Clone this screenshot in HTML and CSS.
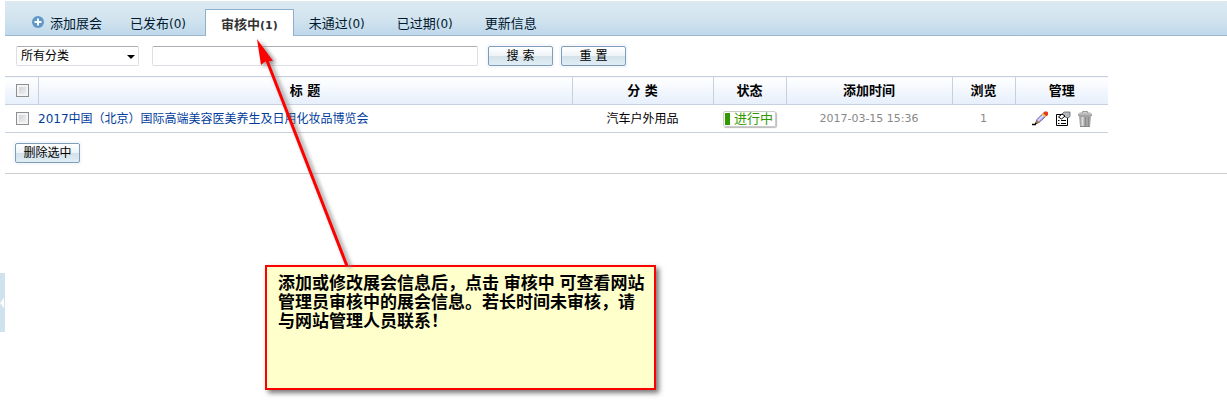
FILE: index.html
```html
<!DOCTYPE html>
<html lang="zh-CN">
<head>
  <meta charset="UTF-8">
  <meta name="viewport" content="width=device-width, initial-scale=1.0">
  <title>展会管理</title>
  <link rel="stylesheet" href="styles.css">
</head>
<body>
  <div class="page">
    <div class="side">
      <button class="side-toggle" type="button" aria-label="收起菜单"></button>
    </div>

    <div class="main">
      <nav class="tabs">
        <a class="tab tab-add" href="#">
          <svg class="icon-add" viewBox="0 0 12 12" width="12" height="12">
            <circle cx="6" cy="6" r="6" fill="#5f97c6"/>
            <path d="M6 2.500v7M2.500 6h7" stroke="#fff" stroke-width="2"/>
          </svg>添加展会</a>
        <a class="tab" href="#">已发布<span class="count">(0)</span></a>
        <a class="tab tab-on" href="#">审核中<span class="count">(1)</span></a>
        <a class="tab" href="#">未通过<span class="count">(0)</span></a>
        <a class="tab" href="#">已过期<span class="count">(0)</span></a>
        <a class="tab" href="#">更新信息</a>
      </nav>

      <form class="search">
        <span class="select-box">
          <select class="category" aria-label="分类">
            <option>所有分类</option>
          </select>
        </span>
        <input class="keyword" type="text" aria-label="关键词">
        <button class="btn" type="button">搜 索</button>
        <button class="btn" type="reset">重 置</button>
      </form>

      <table class="list">
        <colgroup>
          <col class="col-check">
          <col>
          <col class="col-category">
          <col class="col-status">
          <col class="col-time">
          <col class="col-views">
          <col class="col-manage">
        </colgroup>
        <thead>
          <tr>
            <th><input class="check" type="checkbox" aria-label="全选"></th>
            <th>标 题</th>
            <th>分 类</th>
            <th>状态</th>
            <th>添加时间</th>
            <th>浏览</th>
            <th>管理</th>
          </tr>
        </thead>
        <tbody>
          <tr>
            <td><input class="check" type="checkbox" aria-label="选择"></td>
            <td class="title"><a href="#">2017中国（北京）国际高端美容医美养生及日用化妆品博览会</a></td>
            <td>汽车户外用品</td>
            <td><span class="status">进行中</span></td>
            <td class="num">2017-03-15 15:36</td>
            <td class="num">1</td>
            <td>
              <div class="actions">
                <a href="#" aria-label="修改">
                  <svg viewBox="0 0 16 16" width="16" height="16">
                    <path d="M0 13.500h4" stroke="#000" stroke-width="1.500"/>
                    <path d="M3.500 12.500L5 8.500l6-6L14 5l-7 6.500z" fill="#b5b4f5" stroke="#5a5a9a"/>
                    <path d="M6 9.500l6-6" stroke="#dcdcff" stroke-width="1.500"/>
                    <path d="M3 13.500l1.500-4.500 3 2.500z" fill="#a07030"/>
                    <path d="M2.500 13.500l1-2 1.500 1.500z" fill="#000"/>
                    <path d="M9.500 3.500L11 2l3.500 3L13 6.200z" fill="#f8bd45"/>
                    <path d="M11 2l1.500-1.500H15l1 1V4l-1.500 1.200z" fill="#e23a1c"/>
                  </svg>
                </a>
                <a href="#" aria-label="属性">
                  <svg viewBox="0 0 16 16" width="16" height="16">
                    <path d="M1.500 3.500h11v11h-11z" fill="#fff" stroke="#000"/>
                    <path d="M3 9.500h1.500M3 12.500h1.500M6 9.500h5M6 12.500h5" stroke="#000"/>
                    <path d="M6 4l3-3h6v4.500l-2 1.500-3-1z" fill="#b4b8c2" stroke="#666" stroke-width=".8"/>
                    <path d="M3.500 6L7 3l3 2-3.500 3z" fill="#fff" stroke="#000"/>
                  </svg>
                </a>
                <a href="#" aria-label="删除">
                  <svg viewBox="0 0 14 16" width="14" height="16">
                    <path d="M4.500 2V.5h5V2" fill="none" stroke="#999"/>
                    <path d="M0 3l2-1.500h10L14 3v2H0z" fill="#a2a2a2"/>
                    <path d="M1 3h12" stroke="#d6d6d6"/>
                    <path d="M1 5h12l-1 10.500H2z" fill="#a5a5a5"/>
                    <path d="M4.500 6v9" stroke="#dedede" stroke-width="2"/>
                    <path d="M7.500 6v9M10.500 6v9" stroke="#8b8b8b"/>
                    <path d="M2 15.500h10" stroke="#888"/>
                  </svg>
                </a>
              </div>
            </td>
          </tr>
        </tbody>
      </table>

      <div class="foot">
        <button class="btn" type="button">删除选中</button>
      </div>
    </div>
  </div>

  <!-- help note and its arrow float over the list -->
  <div class="note">
    添加或修改展会信息后，点击 审核中 可查看网站管理员审核中的展会信息。若长时间未审核，请与网站管理人员联系！
  </div>
  <svg class="arrow" viewBox="0 0 110 231" width="110" height="231">
    <path d="M16 23L97 231" stroke="#f00" stroke-width="3"/>
    <path d="M7 4L11 30L16 26L23 26z" fill="#f00"/>
  </svg>
</body>
</html>
```

FILE: styles.css
```css
* {
  box-sizing: border-box;
}

body {
  margin: 0;
  background: #fff;
  color: #000;
  font-family: "DejaVu Sans", "Noto Sans CJK SC", sans-serif;
  font-size: 12px;
  line-height: 16px;
}

a {
  color: #003c9b;
  text-decoration: none;
}

button,
input,
select {
  margin: 0;
  font-family: inherit;
  font-size: 12px;
}

.page {
  display: flex;
}

/* left strip that folds the menu */
.side {
  flex: 0 0 5px;
  padding-top: 273px;
}

.side-toggle {
  display: flex;
  align-items: center;
  width: 100%;
  height: 59px;
  padding: 0;
  border: 0;
  background: #cfe2ee;
}

.side-toggle::before {
  content: "";
  border: 5px solid transparent;
  border-left: 0;
  border-right: 4px solid #fff;
}

.main {
  flex: 1;
  min-width: 0;
  padding-top: 1px;
}

/* tabs */
.tabs {
  display: flex;
  align-items: flex-end;
  height: 35px;
  padding-left: 12px;
  border-bottom: 1px solid #9db9d0;
  background: linear-gradient(#dce9f1, #d3e4ef 50%, #bfd8eb);
}

.tab {
  min-width: 88px;
  height: 26px;
  padding: 6px 15px 0;
  color: #00192e;
  font-size: 13px;
  line-height: 18px;
  white-space: nowrap;
}

.tab-add {
  display: flex;
  gap: 6px;
  width: 98px;
}

.icon-add {
  flex: none;
  margin-top: 1px;
}

.tab-on {
  height: 27px;
  margin: 0 0 -1px 2px;
  border: 1px solid #8fb0cc;
  border-bottom: 0;
  background: #fff;
  color: #333;
  font-weight: bold;
}

.count {
  font-size: 12px;
}

.tab-on .count {
  font-size: 11px;
}

/* search */
.search {
  display: flex;
  align-items: center;
  gap: 8px;
  height: 40px;
  padding-left: 11px;
}

.select-box {
  position: relative;
  margin-right: 5px;
}

.select-box::after {
  content: "";
  position: absolute;
  top: 9px;
  right: 4px;
  border: 4px solid transparent;
  border-top-color: #000;
  border-bottom: 0;
  pointer-events: none;
}

.category,
.keyword {
  display: block;
  height: 20px;
  border: 1px solid #dddfe6;
  border-top-color: #abadb3;
  border-radius: 2px;
  background: #fff;
  color: #000;
}

.category {
  width: 123px;
  padding: 0 4px;
  appearance: none;
}

.keyword {
  width: 326px;
  margin-right: 2px;
  padding: 0 4px;
}

.btn {
  width: 65px;
  height: 20px;
  padding: 1px 0 0;
  border: 1px solid #7f9db9;
  border-radius: 2px;
  background: linear-gradient(#fff, #edf3f6 50%, #d3e2ea 51%, #e0edf4);
  box-shadow: 0 0 0 2px #f5f9fe;
  color: #000;
  line-height: 17px;
}

/* list */
.list {
  width: calc(100% - 119px);
  table-layout: fixed;
  border-collapse: collapse;
}

.col-check { width: 33px; }
.col-category { width: 141px; }
.col-status { width: 73px; }
.col-time { width: 166px; }
.col-views { width: 63px; }
.col-manage { width: 93px; }

.list th,
.list td {
  height: 28px;
  padding: 0;
  border: 1px solid #c8cfdf;
  border-width: 1px 0;
  text-align: center;
}

.list th {
  border-right-width: 1px;
  background: linear-gradient(#fff, #e6effb);
  font-size: 13px;
}

.list th:last-child {
  border-right: 0;
}

.list .title {
  text-align: left;
}

.list .num {
  color: #888;
  font-size: 11px;
}

.check {
  display: block;
  width: 13px;
  height: 13px;
  margin-left: 11px;
  border: 1px solid #8e8f8f;
  background: linear-gradient(135deg, #c8ccd2, #f6f6f6);
  box-shadow: inset 0 0 0 2px #f4f4f4;
  appearance: none;
}

.status {
  display: inline-flex;
  align-items: center;
  gap: 4px;
  height: 16px;
  padding: 0 2px 0 1px;
  border: 1px solid #ccc;
  border-radius: 2px;
  box-shadow: 1px 1px 1px #bbb;
  color: #390;
  font-size: 13px;
  line-height: 14px;
  vertical-align: middle;
}

.status::before {
  content: "";
  width: 5px;
  height: 12px;
  background: #390;
}

.actions {
  display: flex;
  justify-content: center;
  gap: 7px;
}

.actions svg {
  display: block;
}

.foot {
  padding: 10px;
  border-bottom: 1px solid #ccc;
}

.foot .btn {
  display: block;
}

/* help note */
.note {
  position: absolute;
  top: 265px;
  left: 265px;
  width: 391px;
  min-height: 125px;
  padding: 7px 6px 7px 11px;
  border: 2px solid #f00;
  background: #ffc;
  box-shadow: 3px 3px 5px #777;
  font-family: "Liberation Sans", "Noto Sans CJK SC", sans-serif;
  font-size: 17px;
  font-weight: bold;
  line-height: 19px;
}

.arrow {
  position: absolute;
  top: 35px;
  left: 250px;
  filter: drop-shadow(3px 2px 2px #888);
  pointer-events: none;
}
```
